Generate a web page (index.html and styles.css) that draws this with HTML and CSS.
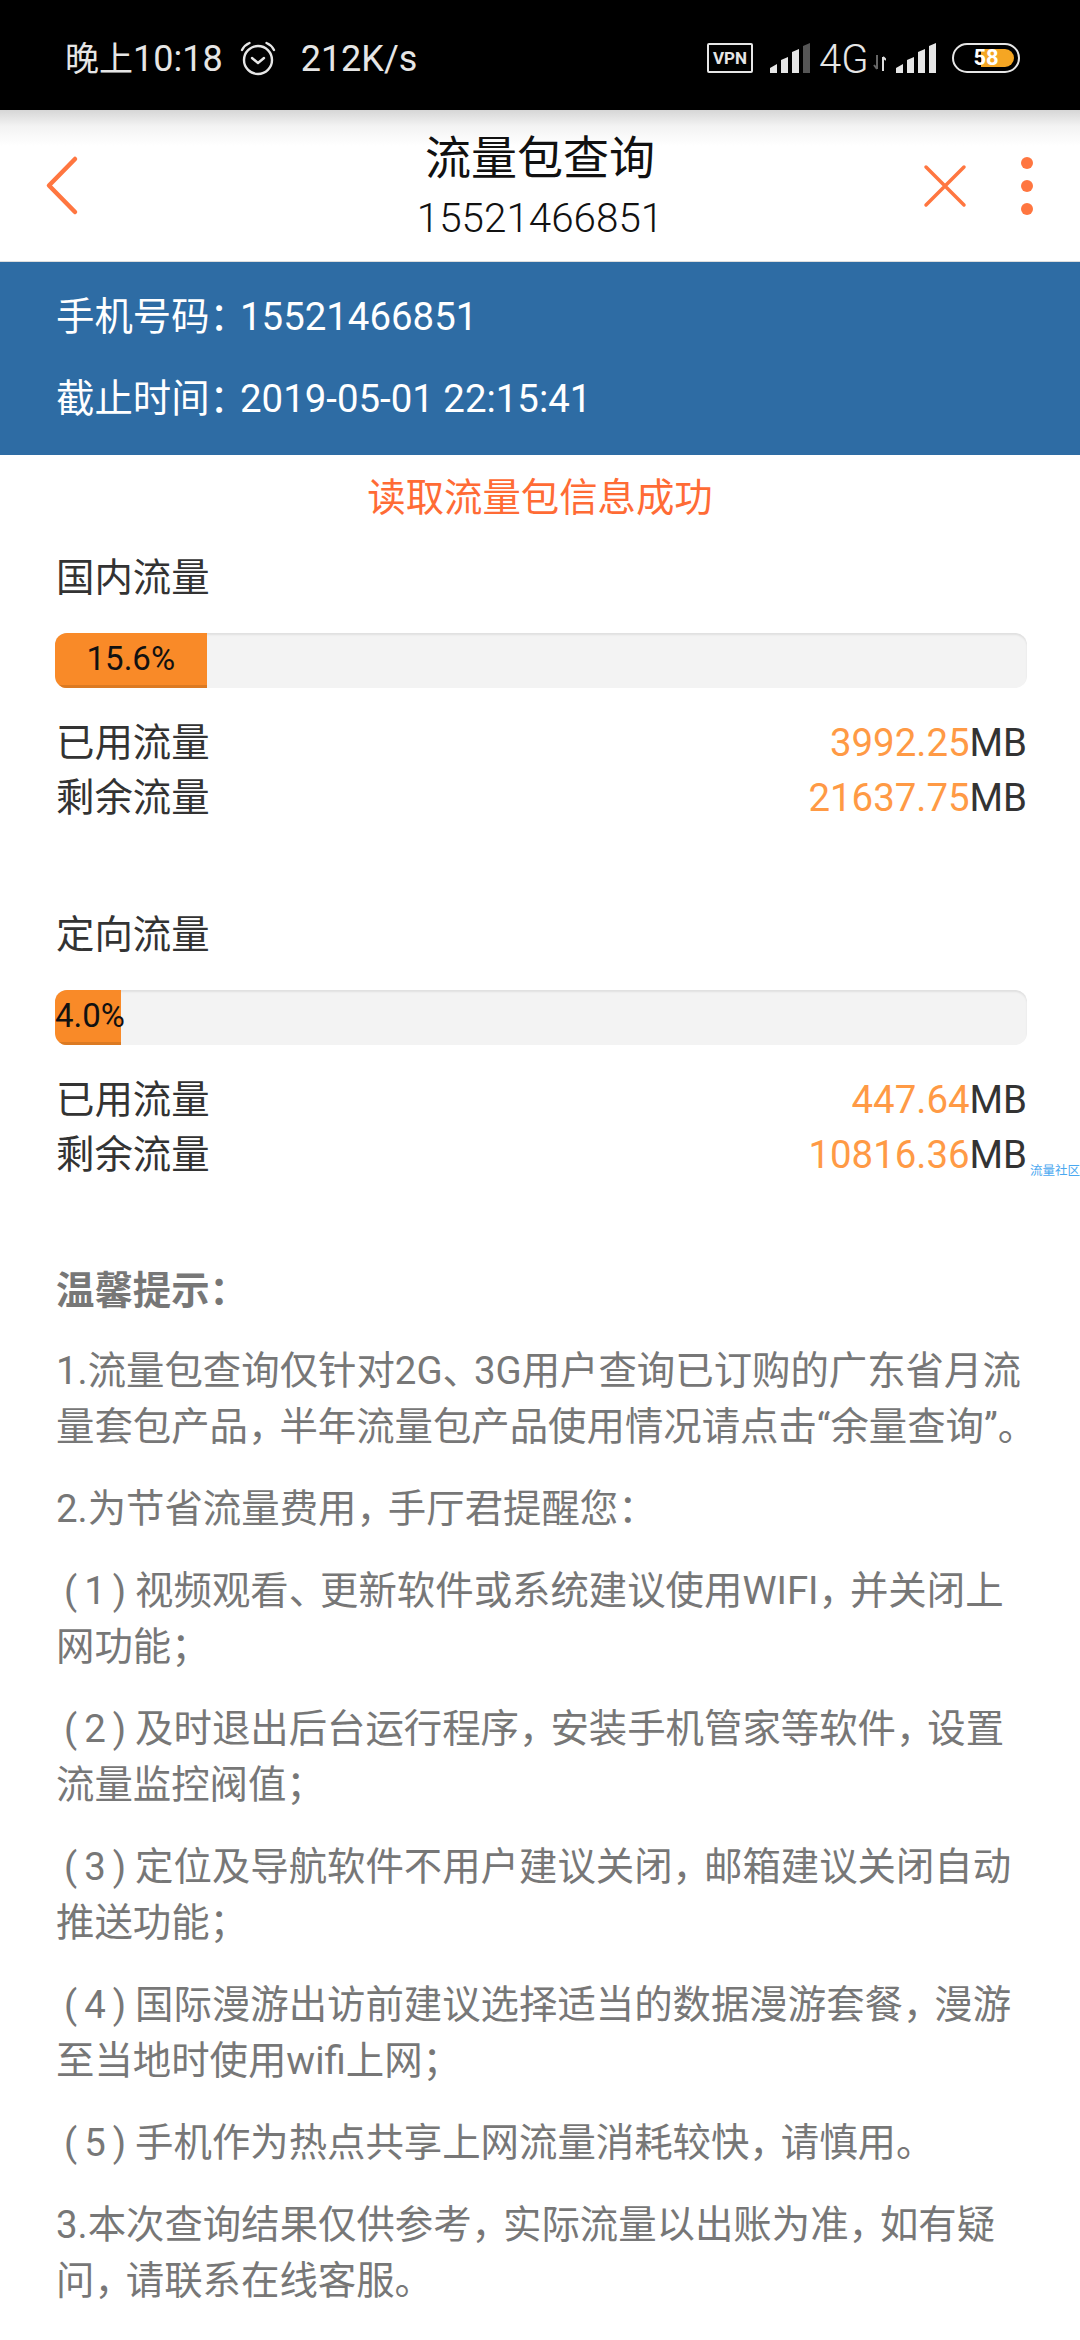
FILE: index.html
```html
<!DOCTYPE html>
<html lang="zh-CN">
<head>
  <meta charset="UTF-8" />
  <title>流量包查询</title>
  <link rel="stylesheet" href="styles.css">
</head>
<body>
  <div class="statusbar">
    <div class="status-left">
      <span class="time-cn">晚上</span><span>10:18</span>
      <svg class="alarm" width="36" height="36" viewBox="0 0 36 36" fill="none" stroke="#e6e6e6" stroke-width="2.400" stroke-linecap="round" stroke-linejoin="round">
        <circle cx="18" cy="19" r="14"/>
        <path d="M12 17l6 5 6-5"/>
        <path d="M2 9C3.500 6 6 3.500 9.500 2"/>
        <path d="M34 9C32.500 6 30 3.500 26.500 2"/>
      </svg>
      <span>212K/s</span>
    </div>
    <div class="status-right">
      <span class="vpn">VPN</span>
      <svg width="40" height="30" viewBox="0 0 40 30" fill="#e6e6e6">
        <path d="M0 30v-5l7-4v9z"/>
        <path d="M11 30V17l7-3v16z"/>
        <path d="M22 30V9l7-3v24z"/>
        <path d="M33 30V3l7-3v30z" fill="#555"/>
      </svg>
      <span class="net">4G</span>
      <svg class="updown" width="13" height="16" viewBox="0 0 13 16" fill="none" stroke-width="2">
        <path d="M4 0v14M1 10l3 4" stroke="#666"/>
        <path d="M10 16V2M13 5l-3-3" stroke="#ddd"/>
      </svg>
      <svg class="sig2" width="40" height="30" viewBox="0 0 40 30" fill="#e6e6e6">
        <path d="M0 30v-5l7-4v9z"/>
        <path d="M11 30V17l7-3v16z"/>
        <path d="M22 30V9l7-3v24z"/>
        <path d="M33 30V3l7-3v30z"/>
      </svg>
      <div class="battery">
        <div class="battery-fill"></div>
        <span class="battery-num">58</span>
      </div>
    </div>
  </div>

  <header class="topbar">
    <svg class="back" width="36" height="62" viewBox="0 0 36 62" fill="none" stroke="#ff7640" stroke-width="4.500" stroke-linecap="round" stroke-linejoin="round">
      <path d="M31 4L5 30.500 31 57"/>
    </svg>
    <div class="title">
      <div class="title-main">流量包查询</div>
      <div class="title-sub">15521466851</div>
    </div>
    <div class="actions">
      <svg width="44" height="44" viewBox="0 0 44 44" fill="none" stroke="#ff7640" stroke-width="3.500" stroke-linecap="round">
        <path d="M3 3l38 38M41 3L3 41"/>
      </svg>
      <div class="dots"><i></i><i></i><i></i></div>
    </div>
  </header>

  <section class="info">
    <p>手机号码<span class="colon">：</span>15521466851</p>
    <p>截止时间<span class="colon">：</span>2019-05-01 22:15:41</p>
  </section>

  <div class="msg">读取流量包信息成功</div>

  <section class="pack">
    <h3>国内流量</h3>
    <div class="bar"><div class="bar-fill" style="width:15.6%">15.6%</div></div>
    <div class="row"><span>已用流量</span><span><em>3992.25</em>MB</span></div>
    <div class="row"><span>剩余流量</span><span><em>21637.75</em>MB</span></div>
  </section>

  <section class="pack">
    <h3>定向流量</h3>
    <div class="bar"><div class="bar-fill" style="width:6.8%">4.0%</div></div>
    <div class="row"><span>已用流量</span><span><em>447.64</em>MB</span></div>
    <div class="row"><span>剩余流量</span><span><em>10816.36</em>MB</span></div>
    <span class="watermark">流量社区</span>
  </section>

  <section class="tips">
    <p class="tips-head">温馨提示：</p>
    <p>1.流量包查询仅针对2G<span class="pu">、</span>3G用户查询已订购的广东省月流量套包产品<span class="pu">，</span>半年流量包产品使用情况请点击“余量查询”<span class="pu">。</span></p>
    <p>2.为节省流量费用<span class="pu">，</span>手厅君提醒您：</p>
    <p><span class="idx">(1)</span>视频观看<span class="pu">、</span>更新软件或系统建议使用WIFI<span class="pu">，</span>并关闭上网功能；</p>
    <p><span class="idx">(2)</span>及时退出后台运行程序<span class="pu">，</span>安装手机管家等软件<span class="pu">，</span>设置流量监控阀值；</p>
    <p><span class="idx">(3)</span>定位及导航软件不用户建议关闭<span class="pu">，</span>邮箱建议关闭自动推送功能；</p>
    <p><span class="idx">(4)</span>国际漫游出访前建议选择适当的数据漫游套餐<span class="pu">，</span>漫游至当地时使用wifi上网；</p>
    <p><span class="idx">(5)</span>手机作为热点共享上网流量消耗较快<span class="pu">，</span>请慎用。</p>
    <p>3.本次查询结果仅供参考<span class="pu">，</span>实际流量以出账为准<span class="pu">，</span>如有疑问<span class="pu">，</span>请联系在线客服。</p>
  </section>
</body>
</html>
```

FILE: styles.css
```css
html, body {
  margin: 0;
  padding: 0;
  background: #fff;
}

body {
  width: 1080px;
  height: 2340px;
  overflow: hidden;
  font-family: Roboto, "Noto Sans CJK SC", sans-serif;
  color: #333;
}

p, h3 {
  margin: 0;
  font-weight: normal;
}

/* status bar */
.statusbar {
  height: 110px;
  background: #000;
  color: #e6e6e6;
  display: flex;
  justify-content: space-between;
  align-items: center;
  padding: 8px 60px 0 65px;
  box-sizing: border-box;
}

.status-left {
  display: flex;
  align-items: center;
  font-size: 36px;
  line-height: 44px;
}

.time-cn {
  font-size: 34px;
}

.alarm {
  margin: 0 25px 0 17px;
}

.status-right {
  display: flex;
  align-items: flex-end;
  height: 30px;
  margin-top: -2px;
}

.vpn {
  width: 46px;
  height: 30px;
  box-sizing: border-box;
  border: 2px solid #e6e6e6;
  border-radius: 2px;
  font-size: 17px;
  font-weight: bold;
  line-height: 26px;
  text-align: center;
  margin-right: 17px;
}

.net {
  width: 48px;
  font-size: 40px;
  line-height: 26px;
  margin-left: 9px;
  font-weight: 300;
}

.updown {
  margin: 0 0 2px 6px;
}

.sig2 {
  margin-left: 10px;
}

.battery {
  position: relative;
  width: 68px;
  height: 30px;
  box-sizing: border-box;
  border: 2px solid #e6e6e6;
  border-radius: 15px;
  margin-left: 16px;
}

.battery-fill {
  position: absolute;
  left: 27px;
  top: 4px;
  bottom: 4px;
  right: 4px;
  background: #f5a623;
  border-radius: 0 9px 9px 0;
}

.battery-num {
  position: absolute;
  left: 0;
  right: 0;
  top: 0;
  font-size: 22px;
  font-weight: bold;
  line-height: 26px;
  text-align: center;
  color: #fff;
}

/* header */
.topbar {
  height: 152px;
  box-sizing: border-box;
  background: linear-gradient(#d6d6d6 0, #f3f3f3 16px, #fff 36px);
  border-bottom: 1px solid #ddd;
  display: grid;
  grid-template-columns: 1fr auto 1fr;
  align-items: center;
  padding: 0 47px;
}

.back {
  margin-left: -3px;
}

.title {
  text-align: center;
  color: #111;
  padding-top: 6px;
}

.title-main {
  font-size: 46px;
  line-height: 60px;
}

.title-sub {
  font-size: 40.400px;
  line-height: 62px;
  font-weight: 300;
}

.actions {
  display: flex;
  justify-content: flex-end;
  align-items: center;
  gap: 54px;
}

.dots {
  display: flex;
  flex-direction: column;
  gap: 11px;
}

.dots i {
  display: block;
  width: 12px;
  height: 12px;
  border-radius: 50%;
  background: #ff7640;
}

/* blue info */
.info {
  height: 193px;
  background: #2e6ca4;
  color: #fff;
  font-size: 38.400px;
  padding: 14px 56px 0;
  box-sizing: border-box;
}

.info p {
  line-height: 82px;
  height: 82px;
}

.colon {
  letter-spacing: -8px;
}

.msg {
  text-align: center;
  font-size: 38.400px;
  line-height: 85px;
  color: #ff6b35;
  margin-bottom: 14px;
}

/* packs */
.pack {
  position: relative;
  padding: 0 53px 0 56px;
}

.pack + .pack {
  margin-top: 86px;
}

.pack h3 {
  font-size: 38.400px;
  line-height: 48px;
  margin-bottom: 31px;
}

.bar {
  height: 55px;
  background: #f3f3f3;
  border-radius: 12px;
  overflow: hidden;
  box-shadow: inset 0 2px 2px rgba(0, 0, 0, .08);
  margin-left: -1px;
  margin-bottom: 27px;
}

.bar-fill {
  height: 55px;
  box-sizing: border-box;
  background: #f98a28;
  border-bottom: 3px solid #dc7a22;
  color: #111;
  font-size: 33px;
  line-height: 52px;
  text-align: center;
  white-space: nowrap;
}

.row {
  display: flex;
  justify-content: space-between;
  font-size: 38.400px;
  line-height: 55px;
}

.row em {
  font-style: normal;
  color: #ff9a45;
}

.watermark {
  position: absolute;
  right: 0;
  top: 252px;
  width: 50px;
  font-size: 12.500px;
  line-height: 16px;
  color: #4aa8f0;
  white-space: nowrap;
}

/* tips */
.tips {
  padding: 0 44px 0 56px;
  font-size: 38.400px;
  line-height: 56px;
  color: #777;
  margin-top: 81px;
}

.tips p {
  margin-bottom: 26px;
}

.tips .tips-head {
  font-weight: bold;
  margin-bottom: 24px;
}

.pu {
  letter-spacing: -7px;
}

.idx {
  padding: 0 2px 0 8px;
  letter-spacing: 7px;
}
```
